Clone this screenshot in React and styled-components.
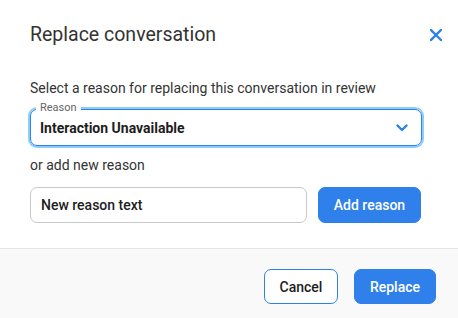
import React from "react";
import styled, { createGlobalStyle } from "styled-components";

const Global = createGlobalStyle`
  html, body { margin: 0; padding: 0; background: #fff; }
  body { font-family: Roboto, "Liberation Sans", sans-serif; color: #222; }
  * { box-sizing: border-box; }
`;

const BLUE = "#2f80ea";

const Dialog = styled.div`
  width: 458px;
  height: 318px;
  display: flex;
  flex-direction: column;
  background: #fff;
`;

const Header = styled.div`
  display: flex;
  align-items: center;
  justify-content: space-between;
  padding: 24px 16px 0 30px;
  height: 46px;
`;

const Title = styled.h2`
  margin: 0;
  font-size: 19.5px;
  line-height: 22px;
  font-weight: 400;
  color: #333;
`;

const CloseButton = styled.button`
  border: 0;
  background: none;
  padding: 0;
  width: 12px;
  height: 12px;
  display: flex;
  cursor: pointer;
`;

const Body = styled.div`
  display: flex;
  flex-direction: column;
  padding: 34px 36px 0 30px;
  flex: 1;
`;

const Text = styled.p`
  margin: 0;
  font-size: 14px;
  line-height: 16px;
  color: #333;
`;

const SelectBox = styled.div`
  position: relative;
  margin-top: 13px;
  height: 37px;
  border: 1px solid ${BLUE};
  border-radius: 7px;
  box-shadow: 0 0 0 2px #8ccdfa;
  display: flex;
  align-items: center;
  justify-content: space-between;
  padding: 0 13px 0 9px;
`;

const FloatLabel = styled.span`
  position: absolute;
  top: -9px;
  left: 5px;
  padding: 0 4px;
  background: #fff;
  font-size: 11px;
  line-height: 14px;
  color: #666;
`;

const SelectValue = styled.span`
  font-size: 14px;
  font-weight: 700;
  color: #1d1d1d;
  margin-top: 1px;
`;

const SubText = styled(Text)`
  margin-top: 11px;
`;

const Row = styled.div`
  display: flex;
  gap: 11px;
  margin-top: 14px;
`;

const Input = styled.div`
  flex: 0 0 277px;
  height: 36px;
  border: 1px solid #c8c8c8;
  border-radius: 7px;
  display: flex;
  align-items: center;
  padding: 0 10px;
  font-size: 14px;
  font-weight: 500;
  color: #1d1d1d;
`;

const Button = styled.button`
  height: ${(p) => p.$h || 35}px;
  width: ${(p) => p.$w}px;
  border-radius: 7px;
  border: 1px solid ${BLUE};
  background: ${(p) => (p.$primary ? BLUE : "#fff")};
  color: ${(p) => (p.$primary ? "#fff" : "#1d1d1d")};
  font-family: Roboto, "Liberation Sans", sans-serif;
  font-size: 14px;
  font-weight: 500;
  padding: 0;
  cursor: pointer;
`;

const Footer = styled.div`
  border-top: 1px solid #e4e4e4;
  background: #f9f9f9;
  height: 70px;
  display: flex;
  justify-content: flex-end;
  align-items: flex-start;
  gap: 16px;
  padding: 20px 22px 0 0;
`;

export default function App() {
  return (
    <Dialog>
      <Global />
      <Header>
        <Title>Replace conversation</Title>
        <CloseButton aria-label="Close">
          <svg width="12" height="12" viewBox="0 0 12 12">
            <path d="M1 1 L11 11 M11 1 L1 11" stroke={BLUE} strokeWidth="2.4" strokeLinecap="square" fill="none" />
          </svg>
        </CloseButton>
      </Header>
      <Body>
        <Text>Select a reason for replacing this conversation in review</Text>
        <SelectBox>
          <FloatLabel>Reason</FloatLabel>
          <SelectValue>Interaction Unavailable</SelectValue>
          <svg width="12" height="8" viewBox="0 0 12 8">
            <path d="M1.5 1.5 L6 6 L10.5 1.5" stroke={BLUE} strokeWidth="2.4" fill="none" strokeLinecap="round" strokeLinejoin="round" />
          </svg>
        </SelectBox>
        <SubText>or add new reason</SubText>
        <Row>
          <Input>New reason text</Input>
          <Button $primary $w={103} $h={36}>Add reason</Button>
        </Row>
      </Body>
      <Footer>
        <Button $w={74}>Cancel</Button>
        <Button $primary $w={82}>Replace</Button>
      </Footer>
    </Dialog>
  );
}
